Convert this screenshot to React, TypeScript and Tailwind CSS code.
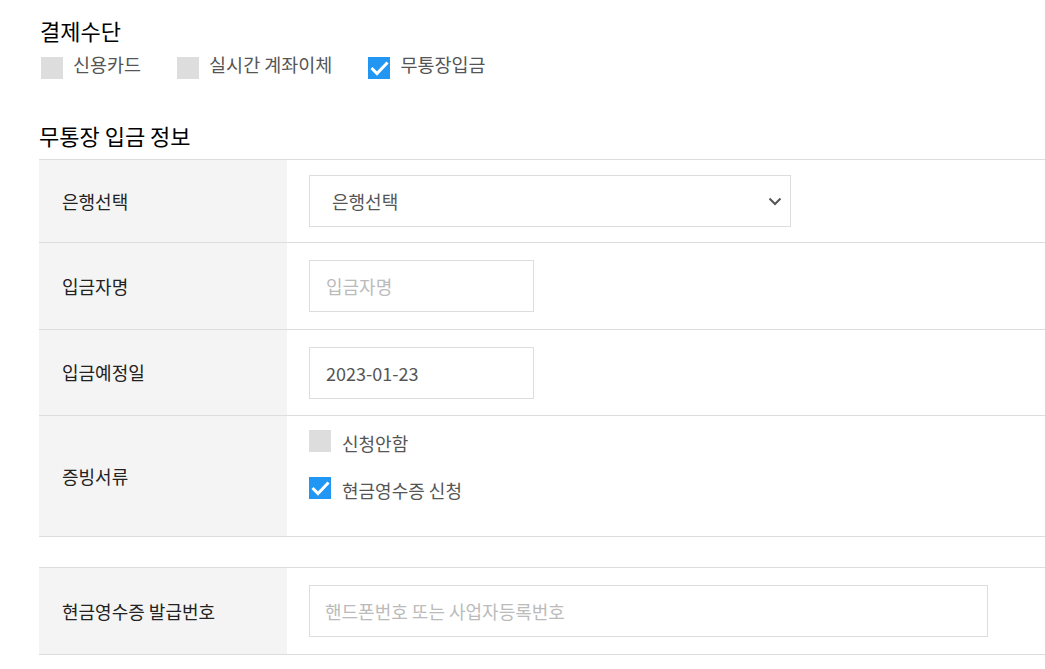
import { useState } from "react";

function Check({ checked, onClick }: { checked: boolean; onClick?: () => void }) {
  return (
    <span
      onClick={onClick}
      className={`flex w-[22px] h-[22px] shrink-0 items-center justify-center cursor-pointer ${
        checked ? "bg-[#2196f3]" : "bg-[#dddddd]"
      }`}
    >
      {checked && (
        <svg width="22" height="22" viewBox="0 0 22 22">
          <path d="M3.5 11 L9 16.5 L19.5 5.5" fill="none" stroke="#fff" strokeWidth="3" />
        </svg>
      )}
    </span>
  );
}

export default function App() {
  const [pay, setPay] = useState<string>("bank");
  const [proof, setProof] = useState<string>("cash");

  const payList = [
    { id: "card", name: "신용카드" },
    { id: "transfer", name: "실시간 계좌이체" },
    { id: "bank", name: "무통장입금" },
  ];

  return (
    <div className="w-full min-h-[669px] bg-white pl-[39px] pt-[16px] font-['Noto_Sans_CJK_KR','Noto_Sans',sans-serif] overflow-hidden">
      <h3 className="pl-[1px] text-[22px] leading-[28px] font-normal text-[#000]">결제수단</h3>
      <div className="flex mt-[10px] pl-[2px]">
        {payList.map((p) => (
          <label key={p.id} className="flex mr-[36px] cursor-pointer">
            <span className="pt-[3px]">
              <Check checked={pay == p.id} onClick={() => setPay(p.id)} />
            </span>
            <span className="ml-[10px] text-[18.5px] leading-[20px] text-[#555]">{p.name}</span>
          </label>
        ))}
      </div>

      <h3 className="mt-[42px] text-[22px] leading-[28px] font-normal text-[#000]">무통장 입금 정보</h3>

      <div className="mt-[10px] border-t border-[#dddddd] text-[18px]">
        <div className="flex h-[83px] border-b border-[#dddddd]">
          <div className="flex w-[248px] items-center bg-[#f4f4f4] pl-[23px] text-[#222]">은행선택</div>
          <div className="flex items-center pl-[22px]">
            <div className="flex w-[482px] h-[52px] items-center justify-between border border-[#dddddd] pl-[22px] pr-[8px] text-[#555]">
              <span>은행선택</span>
              <svg width="14" height="9" viewBox="0 0 14 9">
                <path d="M1.5 1.5 L7 7 L12.5 1.5" fill="none" stroke="#555" strokeWidth="2" />
              </svg>
            </div>
          </div>
        </div>

        <div className="flex h-[87px] border-b border-[#dddddd]">
          <div className="flex w-[248px] items-center bg-[#f4f4f4] pl-[23px] text-[#222]">입금자명</div>
          <div className="flex items-center pl-[22px]">
            <input
              className="w-[225px] h-[52px] border border-[#dddddd] pl-[16px] text-[#555] placeholder:text-[#bbb] outline-none"
              placeholder="입금자명"
            />
          </div>
        </div>

        <div className="flex h-[86px] border-b border-[#dddddd]">
          <div className="flex w-[248px] items-center bg-[#f4f4f4] pl-[23px] text-[#222]">입금예정일</div>
          <div className="flex items-center pl-[22px]">
            <input
              className="w-[225px] h-[52px] border border-[#dddddd] pl-[16px] text-[#555] outline-none"
              defaultValue="2023-01-23"
            />
          </div>
        </div>

        <div className="flex h-[121px] border-b border-[#dddddd]">
          <div className="flex w-[248px] items-center bg-[#f4f4f4] pl-[23px] text-[#222]">증빙서류</div>
          <div className="flex flex-col pl-[22px] pt-[14px]">
            <label className="flex items-start cursor-pointer">
              <Check checked={proof == "none"} onClick={() => setProof("none")} />
              <span className="ml-[11px] mt-[1px] leading-[24px] text-[#555]">신청안함</span>
            </label>
            <label className="flex items-start mt-[22px] cursor-pointer">
              <Check checked={proof == "cash"} onClick={() => setProof("cash")} />
              <span className="ml-[11px] mt-[1px] leading-[24px] text-[#555]">현금영수증 신청</span>
            </label>
          </div>
        </div>

        <div className="h-[31px] border-b border-[#dddddd]"></div>

        <div className="flex h-[87px] border-b border-[#dddddd]">
          <div className="flex w-[248px] items-center bg-[#f4f4f4] pl-[23px] text-[#222]">현금영수증 발급번호</div>
          <div className="flex items-center pl-[22px]">
            <input
              className="w-[679px] h-[52px] border border-[#dddddd] pl-[15px] text-[#555] placeholder:text-[#bbb] outline-none"
              placeholder="핸드폰번호 또는 사업자등록번호"
            />
          </div>
        </div>
      </div>
    </div>
  );
}
